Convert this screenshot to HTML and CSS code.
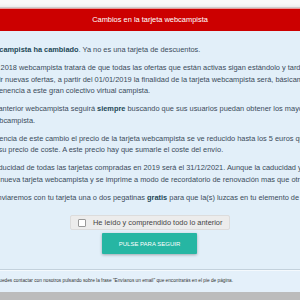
FILE: index.html
```html
<!DOCTYPE html>
<html lang="es">
<head>
  <meta charset="UTF-8">
  <title>Cambios en la tarjeta webcampista</title>
  <link rel="stylesheet" href="styles.css">
</head>
<body>

  <div class="topbar"></div>

  <div class="modal">
    <div class="modal-head">Cambios en la tarjeta webcampista</div>

    <div class="modal-body">
      <p><strong>La tarjeta webcampista ha cambiado</strong>. Ya no es una tarjeta de descuentos.</p>
      <p>Durante el año 2018 webcampista tratará de que todas las ofertas que están activas sigan estándolo y tardará en poder conseguir nuevas ofertas, a partir del 01/01/2019 la finalidad de la tarjeta webcampista será, básicamente, el sentido de pertenencia a este gran colectivo virtual campista.</p>
      <p>Al igual que la anterior webcampista seguirá <strong>siempre</strong> buscando que sus usuarios puedan obtener los mayores ventajas en webcampista.</p>
      <p>Como consecuencia de este cambio el precio de la tarjeta webcampista se ve reducido hasta los 5 euros que es prácticamente su precio de coste. A este precio hay que sumarle el coste del envío.</p>
      <p>La fecha de caducidad de todas las tarjetas compradas en 2019 será el 31/12/2021. Aunque la caducidad ya aparece señalada en la nueva tarjeta webcampista y se imprime a modo de recordatorio de renovación mas que otra cosa.</p>
      <p>Y además te enviaremos con tu tarjeta una o dos pegatinas <strong>gratis</strong> para que la(s) luzcas en tu elemento de ocio.</p>

      <div class="agree-row">
        <label class="agree">
          <span class="check"></span>
          He leído y comprendido todo lo anterior
        </label>
      </div>
      <div class="btn-row">
        <button type="button" class="btn-go">PULSE PARA SEGUIR</button>
      </div>
    </div>

    <div class="modal-foot">
      Si tienes alguna duda puedes contactar con nosotros pulsando sobre la frase "Envíanos un email" que encontrarás en el pie de página.
    </div>
  </div>

</body>
</html>
```

FILE: styles.css
```css
/* ─── Base ─── */
body {
  font-family: 'Liberation Sans', Arial, sans-serif;
  margin: 0;
  background: #bcbcbc;
  overflow: hidden;
}
.topbar {
  height: 7px;
  background: #f9f9f9;
  border-bottom: 1px solid #dedede;
}

/* ─── Modal ─── */
.modal {
  width: 420px;
  margin-left: -60px;
  box-shadow: 0 2px 6px rgba(0,0,0,0.35);
}
.modal-head {
  border-top: 1px solid #e99a9a;
  background: #cc0000;
  color: #fff;
  height: 22px;
  line-height: 22px;
  font-size: 7.45px;
  text-align: center;
}
.modal-body {
  background: #e2eff9;
  padding: 13px 10px 15px 10px;
  color: #3a4b59;
  font-size: 7.4px;
  line-height: 11.5px;
}
.modal-body p { margin: 0 12px 6.6px 0; }
.modal-body strong { color: #1d4856; }

.agree-row { display: flex; justify-content: center; margin-top: 12px; }
.agree {
  display: flex; align-items: center; gap: 7px;
  width: 160px; height: 15px; box-sizing: border-box;
  padding-left: 7px;
  background: #ececec; border: 1px solid #dcdcdc; border-radius: 2px;
  color: #444;
}
.check {
  width: 8px; height: 8px; box-sizing: border-box;
  background: #fff; border: 1px solid #999; border-radius: 1px;
}

.btn-row { display: flex; justify-content: center; margin-top: 3px; }
.btn-go {
  width: 95px; height: 21px;
  background: #26b6a3; color: #fff;
  border: none; border-radius: 1px;
  font-family: inherit; font-size: 6px;
  box-shadow: 0 1px 3px rgba(0,0,0,0.3);
  margin-left: -1px;
}

.modal-foot {
  background: #e4f0fa;
  border-top: 1px solid #c3d1dc;
  box-shadow: inset 0 1px 0 #f4f9fd;
  height: 22px;
  line-height: 22px;
  padding: 0 10px;
  font-size: 4.73px;
  color: #333;
  white-space: nowrap;
}
```
